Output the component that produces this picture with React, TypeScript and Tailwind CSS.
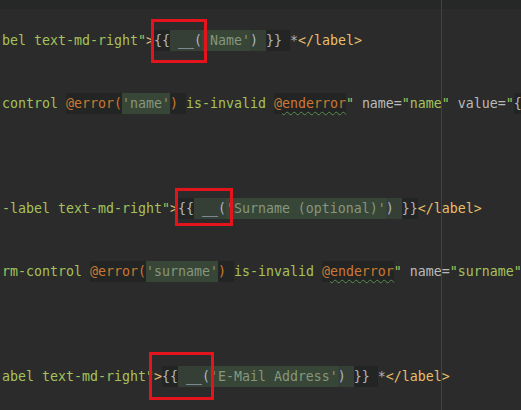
import React from "react";

type Seg = [string, string];

const ATTR = "text-[#a5c25c]";
const TAG = "text-[#e8bf6a]";
const PLAIN = "text-[#a9b7c6]";
const NAME = "text-[#bababa]";
const DARK = "bg-[#232525] text-[#a9b7c6]";
const DARKOR = "bg-[#232525] text-[#cc7832]";
const GREEN = "bg-[#353f35] text-[#a9b7c6]";
const GSTR = "bg-[#384638] text-[#85977c]";
const WAVY =
  "bg-[#232525] text-[#cc7832] underline decoration-wavy decoration-[#5f8f4f] underline-offset-[3px] decoration-[1px]";

const lines: Record<number, Seg[]> = {
  1: [
    ['bel text-md-right"', ATTR],
    [">", TAG],
    ["{{", DARK],
    [" __(", GREEN],
    ["'Name'", GSTR],
    [") ", GREEN],
    ["}} ", DARK],
    ["*", PLAIN],
    ["</label>", TAG],
  ],
  4: [
    ["control ", ATTR],
    ["@error(", DARKOR],
    ["'name'", GSTR],
    [") ", DARKOR],
    ["is-invalid ", ATTR],
    ["@", DARKOR],
    ["enderror", WAVY],
    ['" ', ATTR],
    ["name=", NAME],
    ['"name" ', ATTR],
    ["value=", NAME],
    ['"', ATTR],
    ["{", DARK],
  ],
  9: [
    ['-label text-md-right"', ATTR],
    [">", TAG],
    ["{{", DARK],
    [" __(", GREEN],
    ["'Surname (optional)'", GSTR],
    [") ", GREEN],
    ["}}", DARK],
    ["</label>", TAG],
  ],
  12: [
    ["rm-control ", ATTR],
    ["@error(", DARKOR],
    ["'surname'", GSTR],
    [") ", DARKOR],
    ["is-invalid ", ATTR],
    ["@", DARKOR],
    ["enderror", WAVY],
    ['" ', ATTR],
    ["name=", NAME],
    ['"surname"', ATTR],
  ],
  17: [
    ['abel text-md-right"', ATTR],
    [">", TAG],
    ["{{", DARK],
    [" __(", GREEN],
    ["'E-Mail Address'", GSTR],
    [") ", GREEN],
    ["}} ", DARK],
    ["*", PLAIN],
    ["</label>", TAG],
  ],
};

export default function App() {
  const rows = Array.from({ length: 19 }, (_, i) => i);
  return (
    <div className="relative w-[521px] h-[410px] overflow-hidden bg-[#2b2b2b] font-['DejaVu_Sans_Mono',monospace] text-[13.29px]">
      <div className="h-[9px] bg-[#262727]" />
      <div className="pl-[2px]">
        {rows.map((i) => (
          <div key={i} className="flex h-[21px] items-stretch whitespace-pre">
            {(lines[i] || []).map(([t, c], j) => (
              <span key={j} className={`leading-[21px] ${c}`}>
                {t}
              </span>
            ))}
          </div>
        ))}
      </div>
      <div className="absolute left-[441px] top-0 bottom-0 w-px bg-[#424242]" />
      <div className="absolute left-[151px] top-[19px] h-[44px] w-[56px] border-[3px] border-[#e3141b]" />
      <div className="absolute left-[175px] top-[188px] h-[38px] w-[58px] border-[3px] border-[#e3141b]" />
      <div className="absolute left-[149px] top-[352px] h-[48px] w-[65px] border-[3px] border-[#e3141b]" />
    </div>
  );
}
